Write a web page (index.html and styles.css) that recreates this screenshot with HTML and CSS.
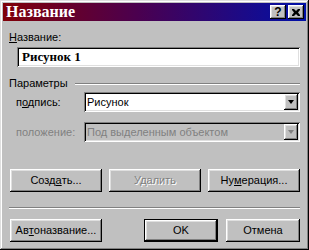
FILE: index.html
```html
<!DOCTYPE html>
<html lang="ru">

<head>
    <meta charset="UTF-8">
    <meta name="viewport" content="width=device-width, initial-scale=1.0">
    <title>Название</title>
    <link rel="stylesheet" href="styles.css">
</head>

<body>
    <div class="window">
        <div class="titlebar">
            <span class="title">Название</span>
            <div class="title-buttons">
                <div class="tbtn help">?</div>
                <div class="tbtn gap">
                    <svg width="8" height="7" viewBox="0 0 8 7">
                        <path d="M0 0h2l2 2 2-2h2v1l-2 2.5 2 2.5v1h-2l-2-2-2 2h-2v-1l2-2.5-2-2.5z" fill="#000"/>
                    </svg>
                </div>
            </div>
        </div>

        <div class="content">
            <div class="label"><u>Н</u>азвание:</div>
            <div class="textbox">Рисунок 1</div>

            <div class="group-head">
                <span>Параметры</span>
                <span class="groove"></span>
            </div>

            <div class="field-row">
                <span class="field-label">п<u>о</u>дпись:</span>
                <div class="combo">
                    <span class="combo-text">Рисунок</span>
                    <div class="combo-btn"><span class="arrow"></span></div>
                </div>
            </div>

            <div class="field-row second disabled">
                <span class="field-label">положение:</span>
                <div class="combo">
                    <span class="combo-text">Под выделенным объектом</span>
                    <div class="combo-btn"><span class="arrow"></span></div>
                </div>
            </div>

            <div class="button-row top">
                <div class="btn wide">Созд<u>а</u>ть...</div>
                <div class="btn wide disabled-btn">Удалить</div>
                <div class="btn wide">Ну<u>м</u>ерация...</div>
            </div>

            <div class="separator"></div>

            <div class="button-row bottom">
                <div class="btn wide">Ав<u>т</u>оназвание...</div>
                <div class="right-buttons">
                    <div class="btn narrow default">OK</div>
                    <div class="btn narrow">Отмена</div>
                </div>
            </div>
        </div>
    </div>
</body>

</html>
```

FILE: styles.css
```css
* {
    margin: 0;
    padding: 0;
    box-sizing: border-box;
}
body {
    background: #c0c0c0;
    font-family: 'Liberation Sans', Arial, sans-serif;
    font-size: 11px;
    line-height: 13px;
    color: #000;
}
u { text-decoration: underline; text-underline-offset: 1px; }

.window {
    width: 309px;
    height: 250px;
    background: #c0c0c0;
    padding: 3px;
    box-shadow: inset -1px -1px #000, inset 1px 1px #dfdfdf,
                inset -2px -2px #808080, inset 2px 2px #fff;
    display: flex;
    flex-direction: column;
}

.titlebar {
    height: 18px;
    display: flex;
    align-items: center;
    justify-content: space-between;
    padding: 0 2px 0 3px;
    background: linear-gradient(to right, #800008 0%, #4a0050 45%, #0010a8 100%);
}
.title {
    color: #fff;
    font-family: 'Liberation Serif', 'Times New Roman', serif;
    font-weight: bold;
    font-size: 16px;
    line-height: 18px;
}
.title-buttons { display: flex; }
.tbtn {
    width: 16px;
    height: 14px;
    background: #c0c0c0;
    box-shadow: inset -1px -1px #000, inset 1px 1px #fff,
                inset -2px -2px #808080, inset 2px 2px #dfdfdf;
    display: flex;
    align-items: center;
    justify-content: center;
}
.tbtn.gap { margin-left: 2px; }
.help {
    font-weight: bold;
    font-size: 12px;
    line-height: 14px;
}

.content {
    padding: 10px 6px 0 6px;
    display: flex;
    flex-direction: column;
}

.textbox {
    margin: 3px 0 0 8px;
    height: 20px;
    background: #fff;
    box-shadow: inset 1px 1px #808080, inset -1px -1px #fff,
                inset 2px 2px #000, inset -2px -2px #dfdfdf;
    padding: 0 5px;
    font-family: 'Liberation Serif', 'Times New Roman', serif;
    font-weight: bold;
    font-size: 13px;
    line-height: 20px;
}

.group-head {
    margin-top: 10px;
    display: flex;
    align-items: center;
}
.groove {
    flex: 1;
    height: 2px;
    margin-left: 7px;
    border-top: 1px solid #808080;
    border-bottom: 1px solid #fff;
}

.field-row {
    margin-top: 2px;
    display: flex;
    align-items: center;
    padding-left: 7px;
}
.field-row.second { margin-top: 10px; }
.field-label { width: 68px; }

.combo {
    flex: 1;
    height: 20px;
    background: #fff;
    box-shadow: inset 1px 1px #808080, inset -1px -1px #fff,
                inset 2px 2px #000, inset -2px -2px #dfdfdf;
    padding: 2px 2px 2px 3px;
    display: flex;
    align-items: center;
}
.combo-text { flex: 1; }
.combo-btn {
    width: 14px;
    height: 16px;
    background: #c0c0c0;
    box-shadow: inset -1px -1px #000, inset 1px 1px #fff,
                inset -2px -2px #808080, inset 2px 2px #dfdfdf;
    display: flex;
    align-items: center;
    justify-content: center;
}
.arrow {
    width: 0;
    height: 0;
    border-left: 3px solid transparent;
    border-right: 3px solid transparent;
    border-top: 4px solid #000;
    margin-left: -1px;
}

.disabled { color: #808080; }
.disabled .combo { background: #c0c0c0; }
.disabled .arrow { border-top-color: #808080; }

.button-row {
    display: flex;
    justify-content: space-between;
    padding-left: 1px;
}
.button-row.top { margin-top: 27px; }
.button-row.bottom { margin-top: 10px; }
.right-buttons { display: flex; gap: 8px; }

.btn {
    height: 23px;
    background: #c0c0c0;
    box-shadow: inset -1px -1px #000, inset 1px 1px #fff,
                inset -2px -2px #808080, inset 2px 2px #dfdfdf;
    display: flex;
    align-items: center;
    justify-content: center;
}
.btn.wide { width: 92px; }
.btn.narrow { width: 74px; }
.btn.default {
    box-shadow: inset 0 0 0 1px #000,
                inset -2px -2px #000, inset 2px 2px #fff,
                inset -3px -3px #808080, inset 3px 3px #dfdfdf;
}
.disabled-btn {
    color: #808080;
    text-shadow: 1px 1px #fff;
}

.separator {
    margin-top: 15px;
    height: 2px;
    border-top: 1px solid #808080;
    border-bottom: 1px solid #fff;
}
```
